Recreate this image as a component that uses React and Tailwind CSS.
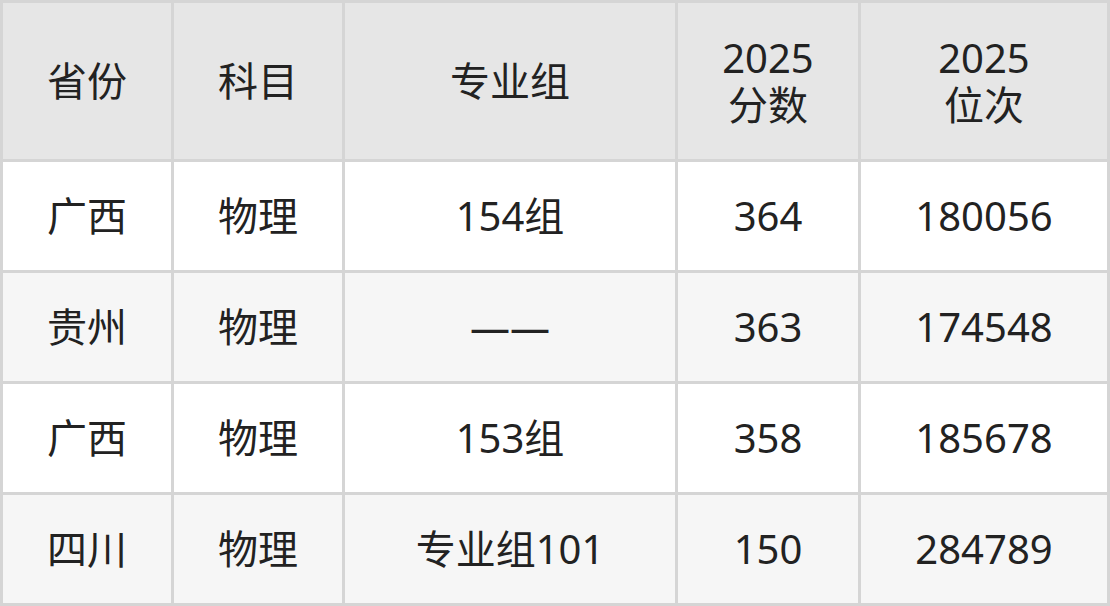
import React from "react";

const rows = [
  ["广西", "物理", "154组", "364", "180056"],
  ["贵州", "物理", "——", "363", "174548"],
  ["广西", "物理", "153组", "358", "185678"],
  ["四川", "物理", "专业组101", "150", "284789"],
];

export default function App() {
  return (
    <div
      className="w-[1110px] h-[606px] bg-[#d5d5d5] p-[3px] grid grid-cols-[168px_168px_330px_180px_246px] grid-rows-[156px_108px_108px_108px_108px] gap-[3px] text-[#222222] text-[40px]"
      style={{ fontFamily: '"Noto Sans", "Noto Sans CJK SC", sans-serif' }}
    >
      {["省份", "科目", "专业组"].map((h) => (
        <div key={h} className="bg-[#e6e6e6] flex items-center justify-center">
          {h}
        </div>
      ))}
      <div className="bg-[#e6e6e6] flex flex-col items-center justify-center leading-[47px]">
        <span>2025</span>
        <span>分数</span>
      </div>
      <div className="bg-[#e6e6e6] flex flex-col items-center justify-center leading-[47px]">
        <span>2025</span>
        <span>位次</span>
      </div>
      {rows.map((r, i) =>
        r.map((c, j) => (
          <div
            key={i + "-" + j}
            className={
              "flex items-center justify-center " +
              (i % 2 === 0 ? "bg-white" : "bg-[#f6f6f6]")
            }
          >
            {c}
          </div>
        ))
      )}
    </div>
  );
}
